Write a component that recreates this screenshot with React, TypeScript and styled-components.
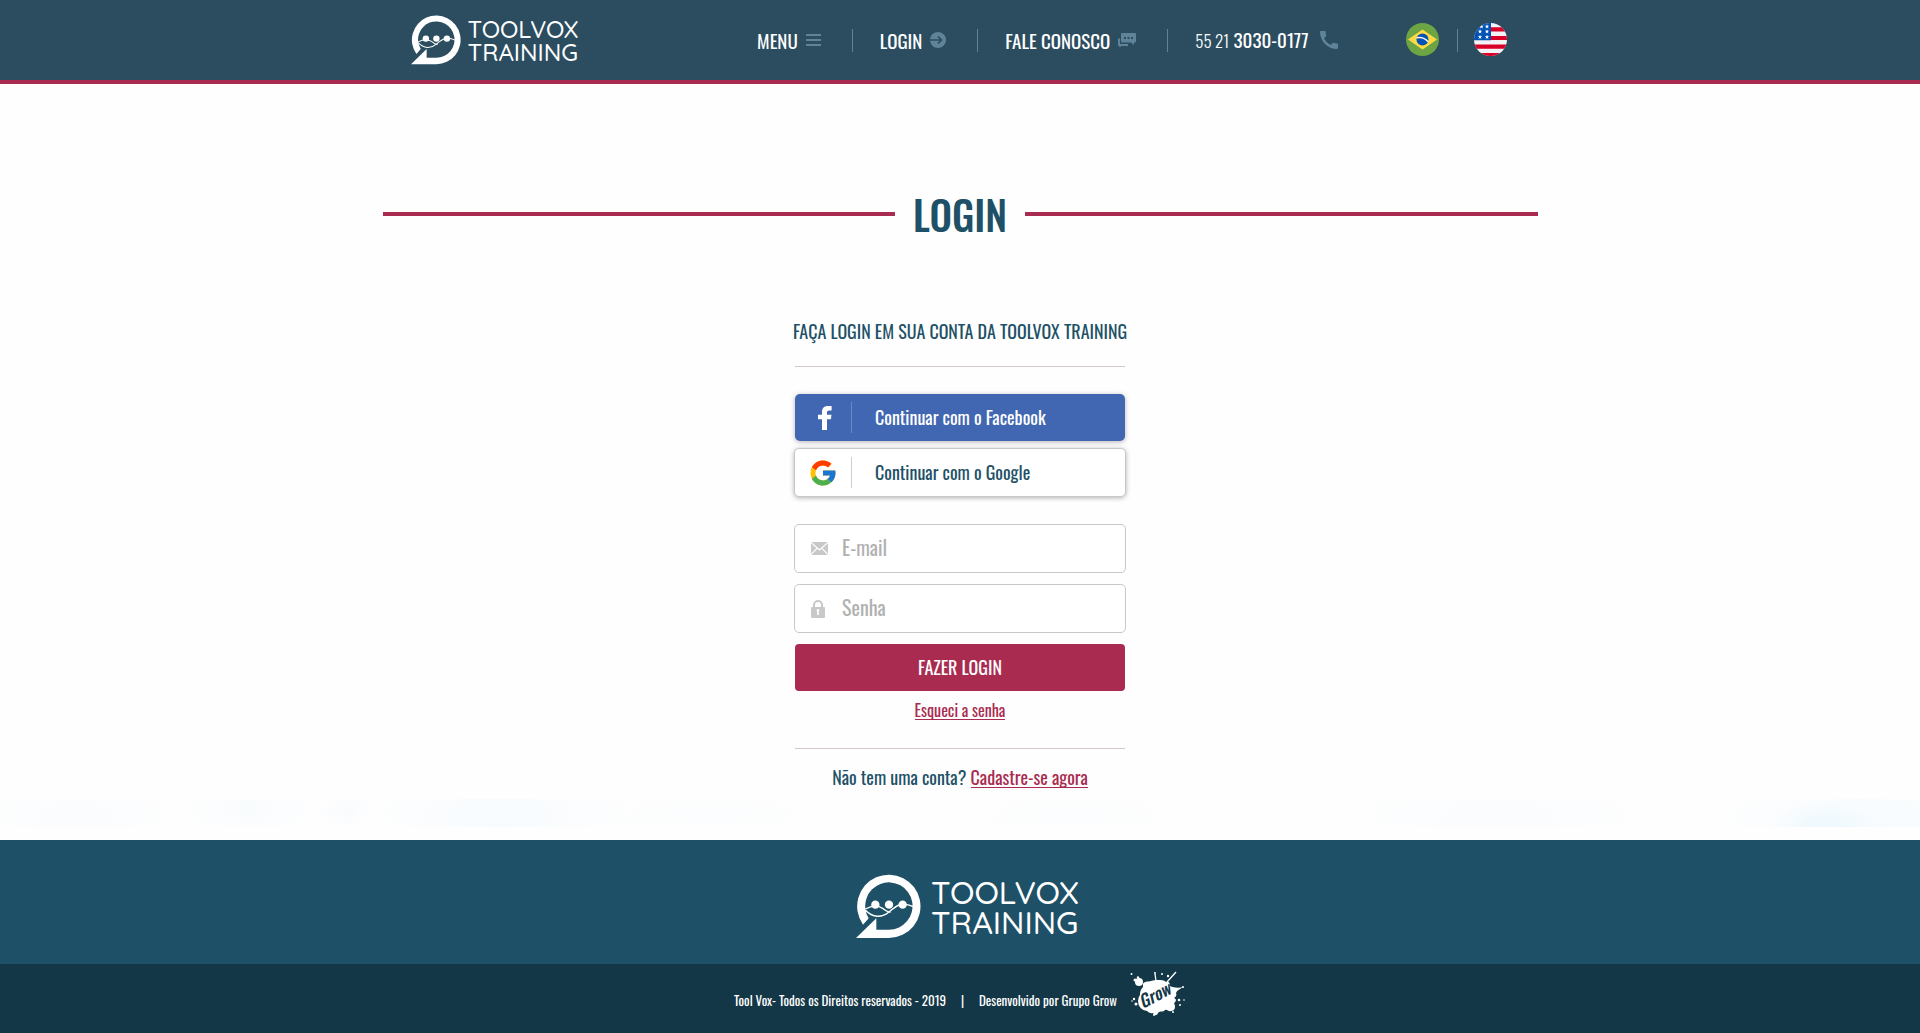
import React from "react";
import styled, { createGlobalStyle } from "styled-components";
import { FcGoogle } from "react-icons/fc";
import { MdCall } from "react-icons/md";

const color = {
  header: "#2b4d5f",
  petrol: "#1e5167",
  night: "#143747",
  wine: "#a92c50",
  muted: "#5f8399",
  line: "#c8c8ca",
  placeholder: "#b1b1b1",
};

const GlobalStyle = createGlobalStyle`
  *, *::before, *::after { box-sizing: border-box; }
  body {
    margin: 0;
    background: #fefefe;
    color: ${color.petrol};
    font-family: Oswald, "Roboto Condensed", "Open Sans Condensed", "Liberation Sans", sans-serif;
    font-size: 18px;
    line-height: 24px;
  }
  svg { display: block; flex: none; }
`;

const Page = styled.div`
  min-height: 100vh;
  display: flex;
  flex-direction: column;
`;

const Header = styled.header`
  background: ${color.header};
  border-bottom: 4px solid ${color.wine};
`;

const HeaderInner = styled.div`
  display: flex;
  align-items: center;
  max-width: 1155px;
  height: 80px;
  margin: 0 auto;
  padding: 0 31px 0 28px;
`;

const LogoLink = styled.a<{ $gap: number }>`
  display: inline-flex;
  align-items: center;
  gap: ${(p) => p.$gap}px;
  color: #fff;
  text-decoration: none;
`;

const Wordmark = styled.span<{ $size: number; $leading: number }>`
  display: flex;
  flex-direction: column;
  padding-top: 2px;
  font-family: Quicksand, Lato, "Liberation Sans", sans-serif;
  font-size: ${(p) => p.$size}px;
  line-height: ${(p) => p.$leading}px;
  font-weight: 500;
`;

const Nav = styled.nav`
  display: flex;
  align-items: center;
  margin-left: auto;
`;

const NavLink = styled.a`
  display: inline-flex;
  align-items: center;
  gap: 8px;
  color: #fff;
  text-decoration: none;
  white-space: nowrap;
  font-size: 19px;
  svg { color: ${color.muted}; }
`;

const Thin = styled.span`
  font-size: 17px;
  font-weight: 300;
`;

const Divider = styled.span<{ $before: number; $after: number }>`
  width: 1px;
  height: 23px;
  margin: 0 ${(p) => p.$after}px 0 ${(p) => p.$before}px;
  background: ${color.muted};
`;

const Languages = styled.div`
  display: flex;
  align-items: center;
  margin-left: 65px;
`;

const FlagButton = styled.button`
  padding: 0 0 2px;
  border: 0;
  background: none;
  cursor: pointer;
`;

const Main = styled.main`
  flex: 1;
  display: flex;
  flex-direction: column;
  align-items: center;
  padding: 96px 20px 0;
`;

const Title = styled.h1`
  display: flex;
  align-items: center;
  gap: 18px;
  width: 100%;
  max-width: 1155px;
  margin: 0 0 71px;
  font-size: 40px;
  line-height: 68px;
  font-weight: 500;
  &::before, &::after {
    content: "";
    flex: 1;
    height: 4px;
    background: ${color.wine};
  }
`;

const Panel = styled.section`
  display: flex;
  flex-direction: column;
  align-items: stretch;
  width: 332px;
  max-width: 100%;
  text-align: center;
`;

const Subtitle = styled.h2`
  align-self: center;
  margin: 0 0 23px;
  font-size: 18px;
  line-height: 24px;
  font-weight: 400;
  white-space: nowrap;
`;

const Rule = styled.hr`
  width: 330px;
  max-width: 100%;
  height: 1px;
  margin: 0 auto;
  border: 0;
  background: #d3c6cc;
`;

const SocialList = styled.div`
  display: flex;
  flex-direction: column;
  gap: 7px;
  margin: 27px 0;
`;

const SocialButton = styled.button<{ $brand?: boolean }>`
  display: flex;
  align-items: center;
  height: ${(p) => (p.$brand ? 47 : 49)}px;
  margin: 0 ${(p) => (p.$brand ? 1 : 0)}px;
  padding: 0 15px;
  border: ${(p) => (p.$brand ? "0" : `1px solid ${color.line}`)};
  border-radius: 5px;
  background: ${(p) => (p.$brand ? "#4267b2" : "#fff")};
  color: ${(p) => (p.$brand ? "#fff" : color.petrol)};
  box-shadow: 0 1px 5px rgba(0, 0, 0, 0.3);
  font: inherit;
  cursor: pointer;
`;

const SocialIcon = styled.span`
  display: flex;
  align-items: center;
  justify-content: center;
  width: 42px;
  height: 31px;
  padding-right: 16px;
  margin-right: 23px;
  border-right: 1px solid #cfcfcf;
  ${SocialButton}:first-child & {
    padding: 0 13px 0 2px;
    border-color: #6a88c4;
  }
`;

const ButtonText = styled.span`
  display: block;
  padding-bottom: 2px;
`;

const Form = styled.form`
  display: flex;
  flex-direction: column;
  gap: 11px;
`;

const Field = styled.label`
  display: flex;
  align-items: center;
  height: 49px;
  padding: 0 16px;
  border: 1px solid ${color.line};
  border-radius: 5px;
  background: #fff;
  color: #c8c8c8;
`;

const FieldIcon = styled.span`
  width: 31px;
`;

const Input = styled.input`
  flex: 1;
  min-width: 0;
  height: 34px;
  padding: 0 0 4px;
  border: 0;
  outline: 0;
  background: transparent;
  color: ${color.petrol};
  font: inherit;
  font-size: 20px;
  &::placeholder { color: ${color.placeholder}; opacity: 1; }
`;

const Submit = styled.button`
  height: 47px;
  margin: 0 1px;
  border: 0;
  border-radius: 4px;
  background: ${color.wine};
  color: #fff;
  font: inherit;
  cursor: pointer;
`;

const TextLink = styled.a`
  display: inline-block;
  border-bottom: 1px solid currentColor;
  color: ${color.wine};
  text-decoration: none;
`;

const Forgot = styled.p`
  margin: 10px 0 28px;
  font-size: 16px;
  line-height: 18px;
  ${TextLink} { line-height: 17px; }
`;

const SignUp = styled.p`
  margin: 16px 0 10px;
  font-size: 18px;
  line-height: 24px;
  ${TextLink} { line-height: 20px; }
`;

const Clouds = styled.div`
  align-self: stretch;
  height: 28px;
  margin: 0 -20px 13px;
  background:
    radial-gradient(ellipse 110px 50px at 4% 70%, #fafcfe, transparent),
    radial-gradient(ellipse 70px 40px at 13% 30%, #f9fcfe, transparent),
    radial-gradient(ellipse 26px 18px at 18% 40%, #f9fbfe, transparent),
    radial-gradient(ellipse 130px 60px at 26% 60%, #f7fbfe, transparent),
    radial-gradient(ellipse 140px 40px at 37% 60%, #fcfdfe, transparent),
    radial-gradient(ellipse 140px 40px at 56% 60%, #fcfdfe, transparent),
    radial-gradient(ellipse 160px 50px at 78% 60%, #fafcfe, transparent),
    radial-gradient(ellipse 50px 24px at 95% 95%, #edf8fe, transparent),
    radial-gradient(ellipse 150px 50px at 97% 80%, #f6fbfe, transparent);
`;

const Footer = styled.footer`
  background: ${color.petrol};
`;

const FooterBrand = styled.div`
  display: flex;
  justify-content: center;
  align-items: center;
  height: 124px;
  padding: 8px 0 0 15px;
`;

const Legal = styled.div`
  display: flex;
  justify-content: center;
  align-items: center;
  height: 69px;
  background: ${color.night};
  color: #fff;
  font-size: 13px;
  line-height: 20px;
`;

const LegalText = styled.p`
  margin: 0;
  padding-top: 2px;
  white-space: pre;
`;

const Credit = styled.a`
  margin: 0 0 9px 13px;
`;

function LogoMark({ size }: { size: number }) {
  return (
    <svg width={size} height={size} viewBox="0 0 195 191" aria-hidden="true">
      <path fill="currentColor" d="M21 150A95 95 0 1 1 99 190H0L61 131V165H99A71 71 0 1 0 38 131Z" />
      <g fill="currentColor">
        <circle cx="58" cy="90" r="12.5" />
        <circle cx="99" cy="90" r="12.5" />
        <circle cx="140" cy="90" r="12.5" />
      </g>
      <g fill="none" stroke="currentColor" strokeWidth="4">
        <path d="M28 106C50 130 78 130 99 112S135 80 172 96" />
        <path d="M28 103C48 92 66 92 80 101S94 114 104 112" />
      </g>
    </svg>
  );
}

function Logo({ mark, gap, size, leading }: { mark: number; gap: number; size: number; leading: number }) {
  return (
    <LogoLink href="#" $gap={gap}>
      <LogoMark size={mark} />
      <Wordmark $size={size} $leading={leading}>
        <span>TOOLVOX</span>
        <span>TRAINING</span>
      </Wordmark>
    </LogoLink>
  );
}

const MenuIcon = () => (
  <svg width="15" height="13" viewBox="0 0 15 13" aria-hidden="true">
    <path fill="currentColor" d="M0 0h15v2H0zM0 5h15v2H0zM0 10h15v2H0z" />
  </svg>
);

const EnterIcon = () => (
  <svg width="16" height="16" viewBox="0 0 16 16" aria-hidden="true">
    <circle cx="8" cy="8" r="8" fill="currentColor" />
    <path d="M0 8h11.500M8 4.500 11.500 8 8 11.500" fill="none" stroke={color.header} strokeWidth="1.600" />
  </svg>
);

const ChatIcon = () => (
  <svg width="18" height="15" viewBox="0 0 18 15" aria-hidden="true">
    <path fill="currentColor" d="M4 0h13a1 1 0 0 1 1 1v7.500a1 1 0 0 1-1 1h-1V12l-3-2.500H4a1 1 0 0 1-1-1V1a1 1 0 0 1 1-1z" />
    <path fill="currentColor" d="M0 5.500h2V11h8v2H3.500L1.500 14.500V13H1a1 1 0 0 1-1-1z" />
    <path fill={color.header} d="M6 4h2v2H6zM9.500 4h2v2h-2zM13 4h2v2h-2z" />
  </svg>
);

const FacebookIcon = () => (
  <svg width="14" height="24" viewBox="0 0 14 24" aria-hidden="true">
    <path fill="currentColor" d="M4 24V13.200H0V8.800h4V6c0-4 2.300-6 6-6h3.600v4.400h-2.300C9.600 4.400 9 5.200 9 6.500v2.300h4.500l-.6 4.400H9V24z" />
  </svg>
);

const BrazilFlag = () => (
  <svg width="33" height="33" viewBox="0 0 33 33" aria-hidden="true">
    <circle cx="16.500" cy="16.500" r="16.500" fill="#6da544" />
    <path d="M16.500 6.500 31 16.500l-14.500 10L2 16.500z" fill="#ffda44" />
    <circle cx="16.500" cy="16.500" r="6" fill="#0052b4" />
    <path d="M10.800 14.800c4-.8 8.500.6 11.300 4" fill="none" stroke="#f0f0f0" strokeWidth="1.600" />
  </svg>
);

const UsaFlag = () => (
  <svg width="33" height="33" viewBox="0 0 33 33" aria-hidden="true">
    <defs>
      <clipPath id="usa-round"><circle cx="16.500" cy="16.500" r="16.500" /></clipPath>
    </defs>
    <g clipPath="url(#usa-round)">
      <path fill="#f3f3f6" d="M0 0h33v33H0z" />
      <path fill="#d80027" d="M16 4.300h17v4.200H16zM16 12.900h17v4.200H16zM0 21.500h33v4.200H0zM0 30h33v3H0z" />
      <path fill="#0052b4" d="M0 0h17v17.200H0z" />
      <g fill="#fff">
        {[[7.5, 3.5], [13, 3.5], [6, 8.5], [13, 8.5], [6, 14], [13, 14]].map(([x, y]) => (
          <path key={`${x}-${y}`} transform={`translate(${x} ${y})`} d="M0-2.300.6-.7H2.200L.9.3 1.400 1.900 0 .9-1.400 1.900-.9.300-2.200-.7H-.6z" />
        ))}
      </g>
    </g>
  </svg>
);

const MailIcon = () => (
  <svg width="17" height="13" viewBox="0 0 17 13" aria-hidden="true">
    <rect width="17" height="13" rx="1" fill="currentColor" />
    <path d="M0 .5 8.500 8 17 .5M0 12.500l6.300-6.300M17 12.500l-6.300-6.300" fill="none" stroke="#fff" strokeWidth="1.200" />
  </svg>
);

const LockIcon = () => (
  <svg width="14" height="18" viewBox="0 0 14 18" aria-hidden="true">
    <path d="M3 8V5a4 4 0 0 1 8 0v3" fill="none" stroke="currentColor" strokeWidth="2" />
    <rect y="7" width="14" height="11" rx="1" fill="currentColor" />
    <path d="M5.500 10.500a1.500 1.500 0 0 1 3 0c0 .6-.5 1-.7 1.300V15H6.200v-3.200c-.2-.3-.7-.7-.7-1.300z" fill="#fff" />
  </svg>
);

const GrowLogo = () => (
  <svg width="56" height="46" viewBox="0 0 56 46" role="img" aria-label="Grow">
    <g fill="#fff">
      <path d="M13 13c1-3 5-2 8-3s4-1 7-1 6 0 8 2c3-1 4 1 4 4 4 2 9 2 14 1-4 2-7 3-8 6 1 2 0 4-2 5 3 1 2 4 0 5 2 4 1 8-3 8-2 1-4-2-6-1-2 3-5 0-7 3-1 3-4 3-5 0-4 1-6-2-7-4-4-1-6-6-5-10-2-4-1-9 2-12z" />
      <ellipse cx="17" cy="30" rx="9" ry="10" />
      <circle cx="9" cy="11" r="4" />
      <circle cx="5" cy="9" r="1.500" />
      <circle cx="8" cy="6.500" r="1.200" />
      <circle cx="1.500" cy="3" r="1" />
      <circle cx="25" cy="2" r="1" />
      <circle cx="32" cy="3" r="1" />
      <circle cx="38" cy="5" r="1.200" />
      <circle cx="4" cy="28" r="1.200" />
      <circle cx="6" cy="33" r="1.500" />
      <circle cx="2" cy="30" r=".8" />
      <circle cx="49" cy="29" r="1.300" />
      <circle cx="54" cy="29" r=".8" />
      <circle cx="50" cy="34" r="1" />
      <circle cx="43" cy="41" r="1" />
      <circle cx="24" cy="44" r="1" />
      <circle cx="53" cy="16" r="1" />
    </g>
    <path d="M37 11 46 1M25 3l1 7" stroke="#fff" strokeWidth="1.300" />
    <text
      x="13" y="38" transform="rotate(-28 13 38)" fill={color.night}
      fontFamily="Oswald, 'Liberation Sans', sans-serif" fontSize="17" fontWeight="500" fontStyle="italic"
    >
      Grow
    </text>
  </svg>
);

export default function App() {
  return (
    <Page>
      <GlobalStyle />
      <Header>
        <HeaderInner>
          <Logo mark={50} gap={7} size={24} leading={23} />
          <Nav aria-label="Principal">
            <NavLink href="#menu">MENU <MenuIcon /></NavLink>
            <Divider $before={31} $after={27} />
            <NavLink href="#login">LOGIN <EnterIcon /></NavLink>
            <Divider $before={31} $after={27} />
            <NavLink href="#contato">FALE CONOSCO <ChatIcon /></NavLink>
            <Divider $before={31} $after={27} />
            <NavLink href="tel:+552130300177">
              <span><Thin>55 21</Thin> 3030-0177</span> <MdCall size={24} />
            </NavLink>
          </Nav>
          <Languages>
            <FlagButton type="button" aria-label="Português"><BrazilFlag /></FlagButton>
            <Divider $before={18} $after={16} />
            <FlagButton type="button" aria-label="English"><UsaFlag /></FlagButton>
          </Languages>
        </HeaderInner>
      </Header>

      <Main>
        <Title>LOGIN</Title>
        <Panel>
          <Subtitle>FAÇA LOGIN EM SUA CONTA DA TOOLVOX TRAINING</Subtitle>
          <Rule />
          <SocialList>
            <SocialButton type="button" $brand>
              <SocialIcon><FacebookIcon /></SocialIcon>
              <ButtonText>Continuar com o Facebook</ButtonText>
            </SocialButton>
            <SocialButton type="button">
              <SocialIcon><FcGoogle size={30} /></SocialIcon>
              <ButtonText>Continuar com o Google</ButtonText>
            </SocialButton>
          </SocialList>
          <Form onSubmit={(e) => e.preventDefault()}>
            <Field>
              <FieldIcon><MailIcon /></FieldIcon>
              <Input type="email" placeholder="E-mail" aria-label="E-mail" />
            </Field>
            <Field>
              <FieldIcon><LockIcon /></FieldIcon>
              <Input type="password" placeholder="Senha" aria-label="Senha" />
            </Field>
            <Submit type="submit"><ButtonText>FAZER LOGIN</ButtonText></Submit>
          </Form>
          <Forgot><TextLink href="#senha">Esqueci a senha</TextLink></Forgot>
          <Rule />
          <SignUp>
            Não tem uma conta? <TextLink href="#cadastro">Cadastre-se agora</TextLink>
          </SignUp>
        </Panel>
        <Clouds />
      </Main>

      <Footer>
        <FooterBrand>
          <Logo mark={65} gap={10} size={32} leading={30} />
        </FooterBrand>
        <Legal>
          <LegalText>Tool Vox- Todos os Direitos reservados - 2019     |     Desenvolvido por Grupo Grow</LegalText>
          <Credit href="#grow"><GrowLogo /></Credit>
        </Legal>
      </Footer>
    </Page>
  );
}
